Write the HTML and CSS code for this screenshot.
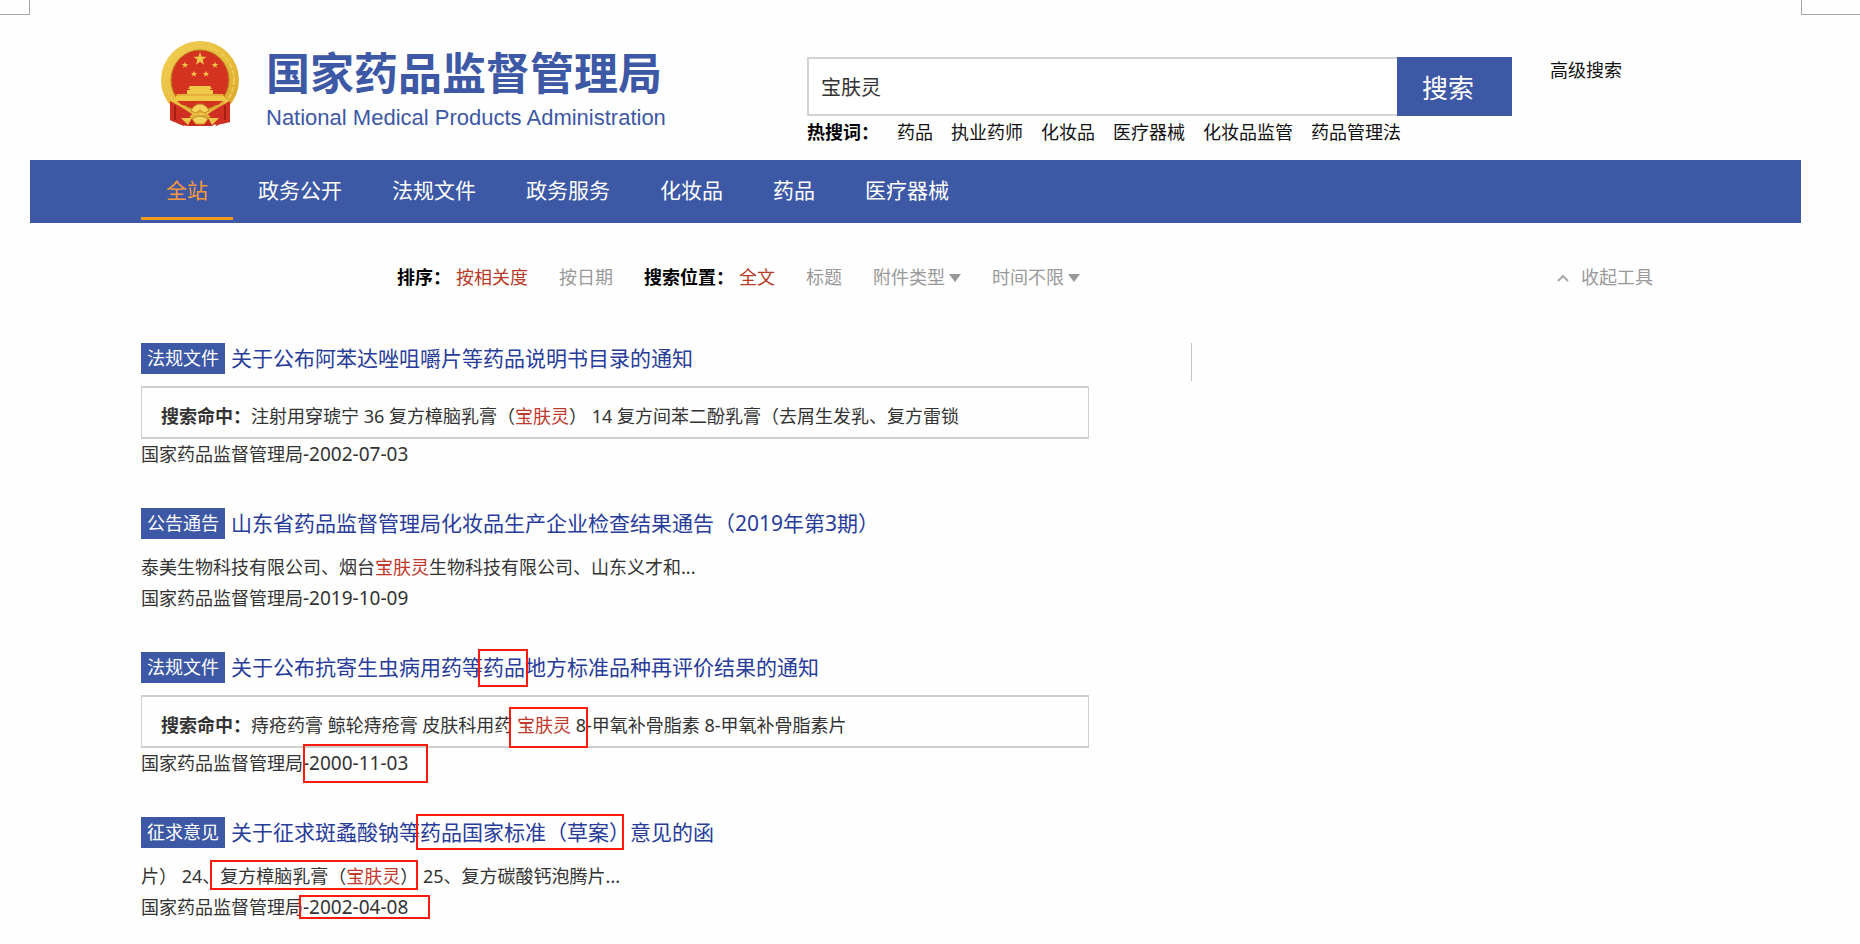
FILE: index.html
```html
<!DOCTYPE html>
<html lang="zh-CN">
<head>
<meta charset="utf-8">
<meta name="viewport" content="width=device-width, initial-scale=1">
<title>国家药品监督管理局 - 搜索</title>
<link rel="stylesheet" href="styles.css">
</head>
<body>
<div class="corner corner-left"></div>
<div class="corner corner-right"></div>
<div class="page">
  <header class="header">
    <div class="brand">
      <svg class="emblem" viewBox="0 0 80 86" aria-hidden="true">
        <defs>
          <linearGradient id="gold" x1="0" y1="0" x2="1" y2="1">
            <stop offset="0" stop-color="#f3cf55"/><stop offset=".5" stop-color="#e8bd3c"/><stop offset="1" stop-color="#d9a52b"/>
          </linearGradient>
          <path id="star" d="M0-10 2.4-3.2 9.5-3.1 3.8 1.2 5.9 8.1 0 4 -5.9 8.1 -3.8 1.2 -9.5-3.1 -2.4-3.2Z"/>
        </defs>
        <path d="M11 60 69 60 70 82 62 84 58 82 52 86 28 86 22 85 10 80Z" fill="#c9281c"/>
        <ellipse cx="40" cy="40" rx="39" ry="39" fill="url(#gold)"/>
        <ellipse cx="40" cy="40" rx="34" ry="34" fill="none" stroke="#eec954" stroke-width="2" stroke-dasharray="5 2"/>
        <ellipse cx="40" cy="40" rx="29" ry="30" fill="#d3331f" stroke="#b98522"/>
        <g fill="#f0c848">
          <use href="#star" transform="translate(40 19) scale(.7)"/>
          <use href="#star" transform="translate(25 25) scale(.34)"/>
          <use href="#star" transform="translate(55 25) scale(.34)"/>
          <use href="#star" transform="translate(34 34) scale(.34)"/>
          <use href="#star" transform="translate(46 34) scale(.34)"/>
          <path d="M30 46H50L52 49H50V50H53V54H63L66 61H14L17 54H27V50H30V49H28Z"/>
        </g>
        <path d="M17 55H63" stroke="#d99a2c"/>
        <path d="M17 61H63L58 65H22Z" fill="#d3331f"/>
        <path d="M10 61Q20 66 32 74L27 80 24 86 10 80ZM70 61Q60 66 48 74L53 80 56 86 70 80Z" fill="#cf3021"/>
        <path d="M31 71Q34 64 40 64Q46 64 49 71L44 73 40 70 36 73Z" fill="#f6d35d" stroke="#c98a23"/>
        <path d="M32 79Q40 73 48 79L44 84H36Z" fill="#f6d35d" stroke="#c98a23"/>
        <path d="M15 66V80M65 66V80" stroke="#a71d16" stroke-width="2"/>
        <path d="M21 78H32L28 85ZM48 78H59L52 85Z" fill="#efc54a"/>
      </svg>
      <div class="brand-text">
        <h1 class="brand-cn">国家药品监督管理局</h1>
        <p class="brand-en">National Medical Products Administration</p>
      </div>
    </div>
    <div class="search">
      <form class="search-form" onsubmit="return false">
        <input class="search-input" type="text" value="宝肤灵" aria-label="搜索关键词">
        <button class="search-button" type="submit">搜索</button>
      </form>
      <div class="hot">
        <strong class="hot-label">热搜词：</strong>
        <a href="#">药品</a><a href="#">执业药师</a><a href="#">化妆品</a><a href="#">医疗器械</a><a href="#">化妆品监管</a><a href="#">药品管理法</a>
      </div>
    </div>
    <a class="advanced" href="#">高级搜索</a>
  </header>

  <nav class="nav">
    <a class="nav-item active" href="#">全站</a>
    <a class="nav-item" href="#">政务公开</a>
    <a class="nav-item" href="#">法规文件</a>
    <a class="nav-item" href="#">政务服务</a>
    <a class="nav-item" href="#">化妆品</a>
    <a class="nav-item" href="#">药品</a>
    <a class="nav-item" href="#">医疗器械</a>
  </nav>

  <div class="tools">
    <div class="group">
      <strong class="group-label">排序：</strong>
      <a class="option selected" href="#">按相关度</a>
      <a class="option" href="#">按日期</a>
    </div>
    <div class="group">
      <strong class="group-label">搜索位置：</strong>
      <a class="option selected" href="#">全文</a>
      <a class="option" href="#">标题</a>
      <span class="picker">
        <select aria-label="附件类型"><option>附件类型</option></select>
        <svg class="arrow" viewBox="0 0 12 8" aria-hidden="true"><path d="M0 0H12L6 8Z"/></svg>
      </span>
      <span class="picker">
        <select aria-label="时间"><option>时间不限</option></select>
        <svg class="arrow" viewBox="0 0 12 8" aria-hidden="true"><path d="M0 0H12L6 8Z"/></svg>
      </span>
    </div>
    <button class="collapse" type="button">
      <svg class="caret" viewBox="0 0 12 8" aria-hidden="true"><path d="M1 7 6 2 11 7"/></svg>收起工具
    </button>
  </div>

  <div class="content">
    <main class="results">
      <article class="result">
        <h2 class="title"><span class="badge">法规文件</span><a href="#">关于公布阿苯达唑咀嚼片等药品说明书目录的通知</a></h2>
        <p class="hit"><strong>搜索命中：</strong>注射用穿琥宁 36 复方樟脑乳膏（<em>宝肤灵</em>） 14 复方间苯二酚乳膏（去屑生发乳、复方雷锁</p>
        <p class="line">国家药品监督管理局<span class="date">-2002-07-03</span></p>
      </article>
      <article class="result">
        <h2 class="title"><span class="badge">公告通告</span><a href="#">山东省药品监督管理局化妆品生产企业检查结果通告（2019年第3期）</a></h2>
        <p class="line">泰美生物科技有限公司、烟台<em>宝肤灵</em>生物科技有限公司、山东义才和...</p>
        <p class="line">国家药品监督管理局<span class="date">-2019-10-09</span></p>
      </article>
      <article class="result">
        <h2 class="title"><span class="badge">法规文件</span><a href="#">关于公布抗寄生虫病用药等<span class="boxed box-word">药品</span>地方标准品种再评价结果的通知</a></h2>
        <p class="hit"><strong>搜索命中：</strong>痔疮药膏 鲸轮痔疮膏 皮肤科用药 <em class="boxed box-hit">宝肤灵</em> 8-甲氧补骨脂素 8-甲氧补骨脂素片</p>
        <p class="line">国家药品监督管理局<span class="date boxed box-date">-2000-11-03</span></p>
      </article>
      <article class="result">
        <h2 class="title"><span class="badge">征求意见</span><a href="#">关于征求斑蟊酸钠等<span class="boxed box-phrase">药品国家标准（草案）</span>意见的函</a></h2>
        <p class="line">片） 24、<span class="boxed box-name">复方樟脑乳膏（<em>宝肤灵</em>）</span> 25、复方碳酸钙泡腾片...</p>
        <p class="line">国家药品监督管理局<span class="date boxed box-date-slim">-2002-04-08</span></p>
      </article>
    </main>
    <aside class="side"></aside>
  </div>
</div>
</body>
</html>
```

FILE: styles.css
```css
* { box-sizing: border-box; }

body {
  margin: 0;
  background: #fefefe;
  color: #333;
  font: 18px/31px "Noto Sans", "Noto Sans CJK SC", sans-serif;
}

h1, h2, p { margin: 0; font-weight: normal; }
a { color: inherit; text-decoration: none; }
em { color: #c0392b; font-style: normal; }
button, input, select { font: inherit; }

.corner {
  position: absolute;
  top: 0;
  height: 15px;
  border-bottom: 1px solid #a6a6a6;
}
.corner-left { left: 0; width: 30px; border-right: 1px solid #a6a6a6; }
.corner-right { right: 0; width: 59px; border-left: 1px solid #a6a6a6; }

.page { margin: 0 59px 0 30px; }

.header {
  display: flex;
  align-items: flex-start;
  height: 160px;
  padding-left: 130px;
}
.brand {
  display: flex;
  flex: 0 0 647px;
  gap: 26px;
  padding-top: 40px;
}
.emblem { width: 80px; height: 86px; }
.brand-text { color: #3d58a5; white-space: nowrap; }
.brand-cn {
  margin-bottom: 8px;
  font: bold 44px/62px "Noto Sans CJK SC", sans-serif;
}
.brand-en { font: 22px/16px "Liberation Sans", sans-serif; }

.search { flex: 0 1 705px; padding-top: 57px; }
.search-form { display: flex; height: 59px; }
.search-input {
  flex: 1;
  min-width: 0;
  padding: 2px 12px 0;
  border: 2px solid #d3d3d3;
  border-right: 0;
  background: #fff;
  color: #333;
  font-size: 20px;
}
.search-button {
  width: 115px;
  padding: 4px 25px 0;
  border: 0;
  background: #3d58a5;
  color: #fff;
  font-size: 26px;
  text-align: left;
}
.hot { display: flex; gap: 18px; padding-top: 1px; color: #111; white-space: nowrap; }
.hot-label { color: #000; }
.advanced { margin: 55px 0 0 38px; color: #111; }

.nav {
  display: flex;
  height: 63px;
  padding-left: 111px;
  background: #3d58a5;
  color: #fff;
  font-size: 21px;
}
.nav-item { height: 60px; padding: 0 25px; line-height: 60px; }
.nav-item.active { border-bottom: 3px solid #f39a1f; color: #f3993c; }

.tools {
  display: flex;
  align-items: center;
  gap: 31px;
  padding: 39px 148px 0 367px;
  color: #999;
  white-space: nowrap;
}
.group { display: flex; gap: 31px; }
.group-label { margin-right: -26px; color: #000; }
.selected { color: #b93a26; }
.picker { display: flex; align-items: center; gap: 4px; }
.picker select {
  width: 72px;
  height: 31px;
  padding: 0;
  border: 0;
  appearance: none;
  background: none;
  color: #999;
}
.arrow { width: 12px; height: 8px; fill: #999; }
.collapse {
  display: flex;
  align-items: center;
  gap: 12px;
  margin-left: auto;
  padding: 0;
  border: 0;
  background: none;
  color: #999;
}
.caret { width: 12px; height: 8px; fill: none; stroke: #aaa; stroke-width: 2; }

.content {
  display: grid;
  grid-template-columns: 948fr 610fr;
  gap: 102px;
  padding: 50px 0 20px 111px;
}
.results { display: grid; gap: 38px; }
.side { height: 38px; border-left: 1px solid #c4c4c4; }

.title {
  display: flex;
  gap: 6px;
  color: #283c9a;
  font-size: 21px;
  white-space: nowrap;
}
.badge {
  padding: 0 6px;
  background: #3d58a5;
  color: #fff;
  font-size: 18px;
}
.date { font-size: 19px; }
.title + .line { margin-top: 13px; }
.hit {
  margin-top: 12px;
  padding: 13px 19px 5px;
  border: solid #cfcfcf;
  border-width: 2px 1px;
}

/* Red frames laid over the words they point out */
.boxed { position: relative; }
.boxed::after {
  content: "";
  position: absolute;
  border: 2px solid #ff1a0d;
}
.box-word::after { inset: -4px -3px -6px -5px; }
.box-hit::after { inset: -6px -17px -11px -8px; }
.box-date::after { inset: -6px -20px -7px 0; }
.box-phrase::after { inset: -4px 6px -4px -4px; }
.box-name::after { inset: -4px 0 -2px -10px; }
.box-date-slim::after { inset: 1px -22px 1px -4px; }
```
